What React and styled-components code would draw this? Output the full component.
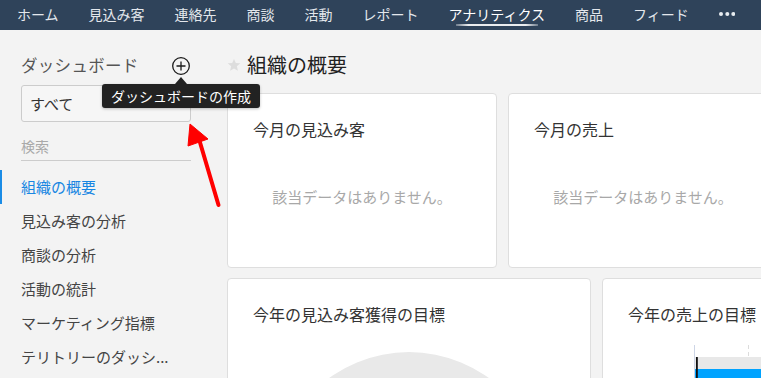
import React from "react";
import styled, { createGlobalStyle } from "styled-components";

const Global = createGlobalStyle`
  html, body { margin: 0; padding: 0; }
  body {
    background: #f3f3f3;
    font-family: "Noto Sans CJK JP", "Noto Sans", sans-serif;
    color: #333;
  }
  #root { height: 378px; overflow: hidden; }
`;

const Page = styled.div`
  position: relative;
  width: 761px;
  height: 378px;
  overflow: hidden;
  background: #f3f3f3;
`;

const TopNav = styled.nav`
  display: flex;
  height: 30px;
  padding: 0 2px;
  background: #2f435a;
`;

const NavItem = styled.div`
  position: relative;
  display: flex;
  align-items: center;
  height: 30px;
  padding: 0 15px 2px;
  box-sizing: border-box;
  font-size: 14px;
  line-height: 28px;
  white-space: nowrap;
  color: ${(p) => (p.$active ? "#ffffff" : "#e3e7ec")};
  &::after {
    content: "";
    display: ${(p) => (p.$active ? "block" : "none")};
    position: absolute;
    top: 24px;
    left: calc(50% - 41px);
    width: 82px;
    height: 1.5px;
    background: linear-gradient(to right, rgba(255,255,255,0.3), rgba(255,255,255,0.9) 15%, rgba(255,255,255,0.9) 85%, rgba(255,255,255,0.3));
  }
`;

const Dots = styled.svg`
  display: block;
`;

const Body = styled.div`
  display: flex;
`;

const Sidebar = styled.aside`
  flex: 0 0 227px;
  box-sizing: border-box;
  padding: 23px 36px 0 21px;
`;

const SideHeader = styled.div`
  display: flex;
  align-items: center;
  justify-content: space-between;
  height: 24px;
  padding-right: 1px;
`;

const SideTitle = styled.div`
  font-size: 16.5px;
  line-height: 24px;
  color: #555;
  letter-spacing: 0.3px;
`;

const PlusWrap = styled.div`
  position: relative;
  width: 18px;
  height: 18px;
`;

const Tooltip = styled.div`
  position: absolute;
  top: 28px;
  left: -70px;
  height: 24px;
  padding: 0 9px;
  box-sizing: border-box;
  background: #222;
  border-radius: 3px;
  color: #fff;
  font-size: 14px;
  line-height: 24px;
  white-space: nowrap;
  box-shadow: 0 1px 3px rgba(0,0,0,0.25);
  z-index: 2;
  &::before {
    content: "";
    position: absolute;
    top: -7px;
    left: 73px;
    border-left: 6px solid transparent;
    border-right: 6px solid transparent;
    border-bottom: 7px solid #222;
  }
`;

const Select = styled.div`
  margin-top: 8px;
  height: 37px;
  box-sizing: border-box;
  border: 1px solid #cccccc;
  border-radius: 3px;
  background: #f6f6f6;
  padding-left: 8px;
  font-size: 15px;
  line-height: 35px;
  color: #333;
`;

const Search = styled.div`
  margin-top: 14px;
  padding-bottom: 4px;
  border-bottom: 1px solid #cccccc;
  font-size: 14px;
  line-height: 20px;
  color: #a9a9a9;
`;

const SideList = styled.ul`
  list-style: none;
  margin: 9px 0 0 -21px;
  padding: 0;
`;

const SideItem = styled.li`
  height: 34px;
  line-height: 34px;
  padding-left: 19px;
  border-left: 2px solid ${(p) => (p.$active ? "#1a8ce6" : "transparent")};
  font-size: 15px;
  white-space: nowrap;
  color: ${(p) => (p.$active ? "#1886e2" : "#444")};
`;

const Main = styled.main`
  flex: 1;
  padding-top: 21px;
  min-width: 0;
`;

const TitleRow = styled.div`
  display: flex;
  align-items: center;
  height: 28px;
  margin-bottom: 14px;
`;

const Star = styled.svg`
  display: block;
  margin-right: 6px;
`;

const PageTitle = styled.h1`
  margin: 0;
  font-size: 20px;
  font-weight: 400;
  line-height: 28px;
  color: #222;
`;

const Grid = styled.div`
  display: flex;
  flex-direction: column;
  gap: 10px;
`;

const CardRow = styled.div`
  display: flex;
  gap: 11px;
`;

const Card = styled.section`
  flex: 0 0 ${(p) => p.$w}px;
  height: ${(p) => p.$h}px;
  box-sizing: border-box;
  background: #fff;
  border: 1px solid #dedede;
  border-radius: 4px;
  padding: 25px 25px 0 25px;
  overflow: hidden;
`;

const CardTitle = styled.h2`
  margin: 0;
  font-size: 16px;
  font-weight: 400;
  line-height: 20px;
  color: #333;
  white-space: nowrap;
`;

const Empty = styled.div`
  margin-top: 48px;
  text-align: center;
  font-size: 15px;
  line-height: 20px;
  color: #a8a8a8;
`;

const ChartSvg = styled.svg`
  display: block;
  margin-top: ${(p) => p.$mt}px;
  overflow: visible;
`;

const ArrowOverlay = styled.svg`
  position: absolute;
  left: 180px;
  top: 115px;
  pointer-events: none;
`;

const navItems = ["ホーム", "見込み客", "連絡先", "商談", "活動", "レポート", "アナリティクス", "商品", "フィード"];
const sideItems = ["組織の概要", "見込み客の分析", "商談の分析", "活動の統計", "マーケティング指標", "テリトリーのダッシ..."];

export default function App() {
  return (
    <Page>
      <Global />
      <TopNav>
        {navItems.map((t) => (
          <NavItem key={t} $active={t === "アナリティクス"}>{t}</NavItem>
        ))}
        <NavItem>
          <Dots width="16" height="6" viewBox="0 0 16 6">
            <circle cx="2" cy="3" r="2" fill="#e8ecf0" />
            <circle cx="8.3" cy="3" r="2" fill="#e8ecf0" />
            <circle cx="14.3" cy="3" r="2" fill="#e8ecf0" />
          </Dots>
        </NavItem>
      </TopNav>
      <Body>
        <Sidebar>
          <SideHeader>
            <SideTitle>ダッシュボード</SideTitle>
            <PlusWrap>
              <svg width="18" height="18" viewBox="0 0 18 18">
                <circle cx="9" cy="9" r="8.3" fill="none" stroke="#1a1a1a" strokeWidth="1.3" />
                <path d="M9 4.5v9M4.5 9h9" stroke="#1a1a1a" strokeWidth="1.3" />
              </svg>
              <Tooltip>ダッシュボードの作成</Tooltip>
            </PlusWrap>
          </SideHeader>
          <Select>すべて</Select>
          <Search>検索</Search>
          <SideList>
            {sideItems.map((t, i) => (
              <SideItem key={t} $active={i === 0}>{t}</SideItem>
            ))}
          </SideList>
        </Sidebar>
        <Main>
          <TitleRow>
            <Star width="14" height="14" viewBox="0 0 24 24">
              <path d="M12 1.5l3.1 7.1 7.7.6-5.9 5 1.8 7.5L12 17.8l-6.7 3.9 1.8-7.5-5.9-5 7.7-.6z" fill="#dddddd" />
            </Star>
            <PageTitle>組織の概要</PageTitle>
          </TitleRow>
          <Grid>
            <CardRow>
              <Card $w={270} $h={175}>
                <CardTitle>今月の見込み客</CardTitle>
                <Empty>該当データはありません。</Empty>
              </Card>
              <Card $w={270} $h={175}>
                <CardTitle>今月の売上</CardTitle>
                <Empty>該当データはありません。</Empty>
              </Card>
            </CardRow>
            <CardRow>
              <Card $w={364} $h={200}>
                <CardTitle>今年の見込み客獲得の目標</CardTitle>
                <ChartSvg $mt={28} width="312" height="60" viewBox="0 0 312 60">
                  <path d="M20 136 A136 136 0 0 1 292 136 L232 136 A76 76 0 0 0 80 136 Z" fill="#e9e9e9" />
                </ChartSvg>
              </Card>
              <Card $w={364} $h={200}>
                <CardTitle>今年の売上の目標</CardTitle>
                <ChartSvg $mt={21} width="312" height="60" viewBox="0 0 312 60">
                  <line x1="120.5" y1="0" x2="120.5" y2="16" stroke="#dcdcdc" strokeWidth="1" strokeDasharray="4 3" />
                  <rect x="67" y="12" width="250" height="12" fill="#e8e8e8" />
                  <rect x="67" y="24" width="250" height="30" fill="#00a3ff" />
                  <line x1="66.5" y1="0" x2="66.5" y2="60" stroke="#cdd5e6" strokeWidth="1" />
                  <rect x="68" y="12" width="1.8" height="48" fill="#111" />
                </ChartSvg>
              </Card>
            </CardRow>
          </Grid>
        </Main>
      </Body>
      <ArrowOverlay width="50" height="100" viewBox="0 0 50 100">
        <line x1="19" y1="24" x2="38.5" y2="90" stroke="#ff0000" strokeWidth="4" strokeLinecap="round" />
        <path d="M10 9 L8 31 L28 24 Z" fill="#ff0000" stroke="#ff0000" strokeWidth="1" strokeLinejoin="round" />
      </ArrowOverlay>
    </Page>
  );
}
